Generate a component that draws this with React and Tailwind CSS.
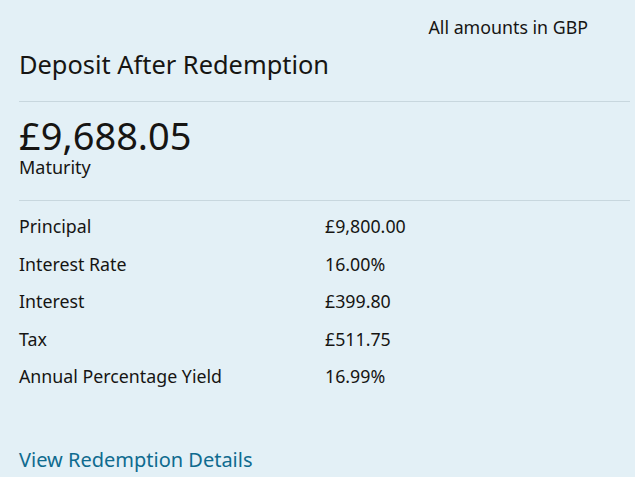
const rows = [
  ["Principal", "£9,800.00"],
  ["Interest Rate", "16.00%"],
  ["Interest", "£399.80"],
  ["Tax", "£511.75"],
  ["Annual Percentage Yield", "16.99%"],
];

export default function App() {
  return (
    <div
      className="w-[635px] h-[477px] bg-[#e3f0f6] text-[#161513] pl-[19px] pr-[5px] overflow-hidden"
      style={{ fontFamily: '"Noto Sans", sans-serif' }}
    >
      {/* Header */}
      <div className="flex justify-end pr-[42px] pt-[15px]">
        <span className="text-[17.8px] leading-[24px]">All amounts in GBP</span>
      </div>
      <h1 className="text-[25.4px] leading-[32px] mt-[9px] pb-[21px] border-b border-[#c8d7de]">
        Deposit After Redemption
      </h1>

      {/* Maturity amount */}
      <div className="pt-[12px] pb-[21px] border-b border-[#c8d7de]">
        <div className="text-[38px] leading-[42px]">£9,688.05</div>
        <div className="text-[18px] leading-[23px]">Maturity</div>
      </div>

      {/* Breakdown */}
      <div className="pt-[7px]">
        {rows.map(([label, value]) => (
          <div key={label} className="flex h-[37.5px] items-center text-[17.8px]">
            <span className="w-[306px]">{label}</span>
            <span>{value}</span>
          </div>
        ))}
      </div>

      <a href="#" className="block mt-[50px] text-[20px] leading-[28px] text-[#0f6b8f]">
        View Redemption Details
      </a>
    </div>
  );
}
